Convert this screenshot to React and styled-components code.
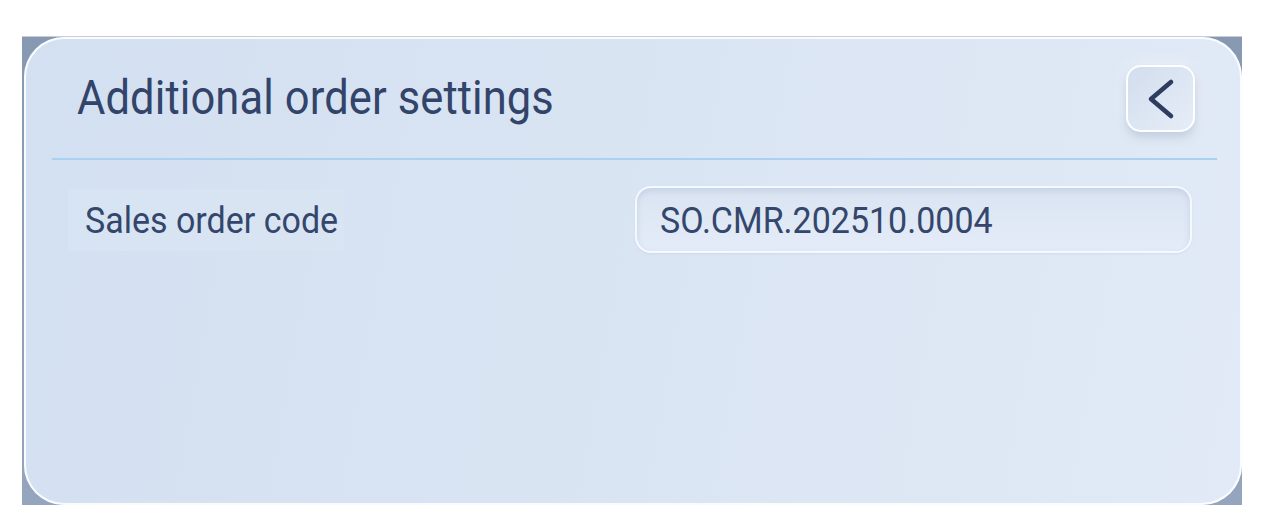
import React from "react";
import styled, { createGlobalStyle } from "styled-components";

const Global = createGlobalStyle`
  html, body { margin: 0; padding: 0; background: #ffffff; }
  body { font-family: Roboto, "Noto Sans", sans-serif; }
`;

const Page = styled.div`
  padding: 36px 29px 0 22px;
`;

const Backdrop = styled.div`
  width: 1220px;
  height: 469px;
  background: linear-gradient(180deg, #8798b3 0%, #95a5bd 100%);
  border-top: 1px solid #c9ced6;
  box-sizing: border-box;
  display: flex;
  padding-left: 2px;
`;

const Card = styled.section`
  flex: 1;
  border-radius: 40px;
  background: linear-gradient(100deg, #d3e0f1 0%, #d9e4f3 45%, #e1eaf6 100%);
  box-shadow: inset 0 0 0 2px rgba(255, 255, 255, 0.85);
  display: flex;
  flex-direction: column;
  padding: 0 25px 0 28px;
`;

const Header = styled.header`
  height: 121px;
  display: flex;
  align-items: center;
  justify-content: space-between;
  padding: 0 22px 0 25px;
  border-bottom: 2px solid #a8d2f0;
`;

const Title = styled.h1`
  margin: 0;
  font-family: Roboto, sans-serif;
  font-weight: 400;
  font-size: 43.5px;
  letter-spacing: 0.1px;
  color: #324469;
  transform: scaleY(1.1);
  margin-top: 2px;
`;

const BackButton = styled.button`
  width: 69px;
  height: 67px;
  border-radius: 15px;
  border: 2px solid rgba(255, 255, 255, 0.95);
  background: linear-gradient(135deg, #d2ddee 0%, #e6edf8 100%);
  box-shadow: 0 5px 10px rgba(120, 140, 175, 0.35), 0 0 16px rgba(255, 255, 255, 0.6);
  display: flex;
  align-items: center;
  justify-content: center;
  padding: 0;
  margin-top: 2px;
  cursor: pointer;
`;

const Row = styled.div`
  display: grid;
  grid-template-columns: 1fr 557px;
  align-items: center;
  margin-top: 26px;
  padding: 0 25px 0 16px;
`;

const Label = styled.div`
  justify-self: start;
  padding: 9px 6px 9px 17px;
  background: rgba(230, 238, 250, 0.2);
  font-size: 34px;
  color: #34466b;
  transform: scaleY(1.08);
`;

const ValueBox = styled.div`
  height: 67px;
  box-sizing: border-box;
  border-radius: 16px;
  border: 2px solid rgba(247, 250, 255, 0.9);
  background: linear-gradient(180deg, #dae4f2 0%, #e4ecf8 100%);
  box-shadow: inset 0 3px 6px rgba(140, 160, 195, 0.28), 0 1px 2px rgba(150, 170, 200, 0.2);
  display: flex;
  align-items: center;
  padding: 0 0 0 23px;
  font-size: 34px;
  color: #34466b;
`;

const ValueText = styled.span`
  display: inline-block;
  transform: scaleY(1.08);
`;

export default function App() {
  return (
    <>
      <Global />
      <Page>
        <Backdrop>
          <Card>
            <Header>
              <Title>Additional order settings</Title>
              <BackButton aria-label="Back">
                <svg width="30" height="42" viewBox="0 0 30 42" fill="none">
                  <path d="M25 4 L5 21 L25 38" stroke="#2e3d5e" strokeWidth="4.6" strokeLinecap="round" strokeLinejoin="round" />
                </svg>
              </BackButton>
            </Header>
            <Row>
              <Label>Sales order code</Label>
              <ValueBox>
                <ValueText>SO.CMR.202510.0004</ValueText>
              </ValueBox>
            </Row>
          </Card>
        </Backdrop>
      </Page>
    </>
  );
}
